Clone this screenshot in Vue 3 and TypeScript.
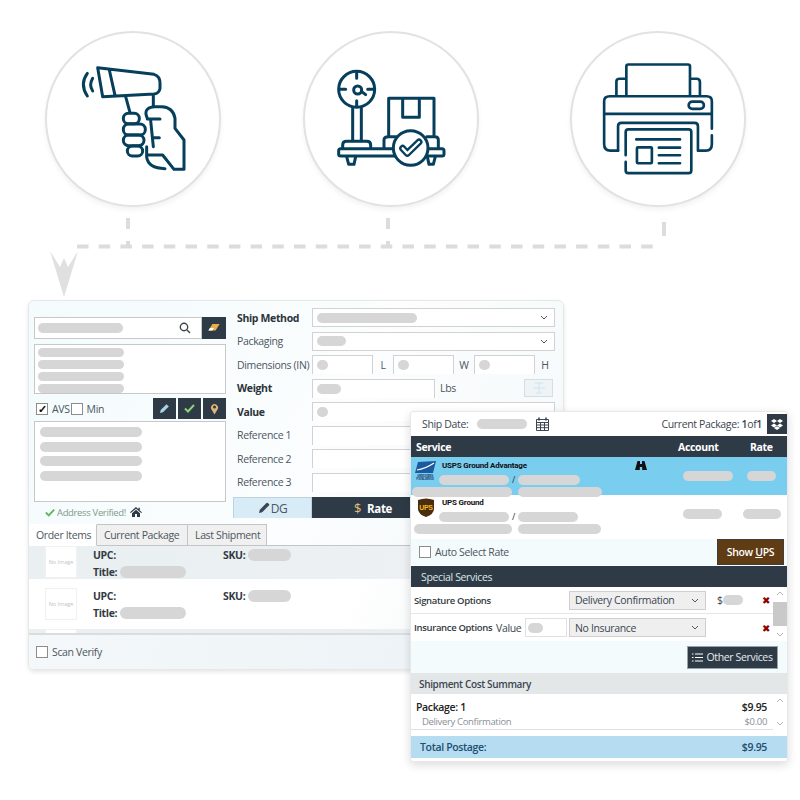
<script setup lang="ts">
const addressLines = [86, 86, 86, 86]
const shipLines = [102, 102, 102, 102]
const fields = [
  { label: 'Ship Method', bold: true, pill: 100, select: true },
  { label: 'Packaging', bold: false, pill: 29, select: true }
]
const refs = ['Reference 1', 'Reference 2', 'Reference 3']
const items = [
  { id: 1, shaded: true },
  { id: 2, shaded: false }
]
const rates = [
  { id: 'usps', name: 'USPS Ground Advantage', active: true, a: 70, b: 62, c: 100, d: 84, acct: 50, rate: 29, rateOffset: 0, indent: 0 },
  { id: 'ups', name: 'UPS Ground', active: false, a: 70, b: 60, c: 98, d: 83, acct: 39, rate: 38, rateOffset: -4, indent: 2 }
]
</script>

<template>
  <div class="page">
    <div class="steps">
      <div class="step">
        <svg viewBox="45 -57 528 528" class="step__icon">
          <path d="M203 53L372 73Q390 78 390 100V115Q388 130 372 132L218 140ZM238 60L255 136M172 70Q148 102 172 138M188 85Q176 105 188 123M287 140L300 188M370 134V170" />
          <path d="M352 205Q338 175 370 170H395Q430 172 435 205V235L462 270V358H432L398 315H350M352 207H390M362 212L370 290M388 263H372M350 290V322Q355 355 405 356" />
          <rect x="280" y="190" width="48" height="31" rx="15" />
          <rect x="280" y="222" width="66" height="33" rx="16" />
          <rect x="280" y="255" width="62" height="32" rx="16" />
          <rect x="292" y="288" width="46" height="30" rx="15" />
        </svg>
      </div>
      <div class="step">
        <svg viewBox="39 -57 528 528" class="step__icon">
          <circle cx="200" cy="118" r="54" />
          <path d="M200 68V85M200 152V168M150 118H167M233 118H250M214 124L227 134M188 172V272M214 172V272" />
          <circle cx="203" cy="120" r="12" />
          <path d="M158 293V285Q158 274 170 274H230Q242 274 242 285V293" />
          <path d="M320 296H152Q146 296 146 302V312Q146 318 152 318H320M405 296H456Q462 296 462 302V312Q462 318 456 318H405" />
          <path d="M170 320L176 343H192L197 320M412 320L417 343H430L436 320" />
          <path d="M296 260V145H432V260M338 145V202H388V145M282 293V270Q282 260 295 260H320M410 260H435Q445 260 445 270V293" />
          <circle cx="362" cy="294" r="52" class="step__fill" />
          <path d="M338 295L352 310L387 276" class="step__check" />
          <path d="M338 295L352 310L387 276" class="step__check-in" />
        </svg>
      </div>
      <div class="step">
        <svg viewBox="30 -57 531 531" class="step__icon step__icon--thin">
          <path d="M200 138V50Q200 44 206 44H386Q392 44 392 50V138M170 138V95Q170 87 180 87H198M394 87H412Q422 87 422 97V138" />
          <path d="M458 238V155Q458 140 442 140H150Q133 140 133 155V285Q133 304 152 304H175M458 258V285Q458 304 440 304H418M133 193H458" />
          <rect x="388" y="156" width="46" height="22" rx="11" />
          <path d="M175 304V230Q175 220 185 220H406Q416 220 416 230V304" />
          <path d="M198 318V248Q198 240 206 240H388Q396 240 396 248V364Q396 372 388 372H206Q198 372 198 364V338" />
          <path d="M230 270H362M298 295H362M298 318H362M298 342H362" />
          <rect x="232" y="294" width="45" height="48" rx="3" />
        </svg>
      </div>
    </div>

    <svg class="flow" width="800" height="300" viewBox="0 0 800 300">
      <path d="M128 218V229M128 241V247M388 218V229M388 241V247M664 222V236" class="flow__stub" />
      <path d="M77 246.5H655" class="flow__line" />
      <polygon points="50,251 60,267 64,258 68,267 78,251 64,297" class="flow__arrow" />
    </svg>

    <section class="shipment">
      <div class="shipment__top">
        <div class="address">
          <div class="search">
            <div class="search__input">
              <span class="pill" style="width: 85px"></span>
              <svg width="12" height="12" viewBox="0 0 12 12" class="search__glass">
                <circle cx="5" cy="5" r="3.7" />
                <path d="M8 8l3 3" />
              </svg>
            </div>
            <button class="dark-btn dark-btn--wide">
              <svg width="12" height="8" viewBox="0 0 14 10"><path d="M5 0h9L9 8H0z" fill="#e8b04a" /><path d="M0 8l2-3h5L5 8z" fill="#fff" /></svg>
            </button>
          </div>
          <div class="box box--list">
            <span v-for="(w, i) in addressLines" :key="i" class="pill pill--line" :style="{ width: w + 'px' }"></span>
          </div>
          <div class="avs">
            <label class="check"><span class="check__box check__box--on">✓</span>AVS</label>
            <label class="check"><span class="check__box"></span>Min</label>
            <div class="avs__actions">
              <button class="dark-btn">
                <svg width="11" height="11" viewBox="0 0 11 11"><path d="M1 10l.7-3L7.5 1.2l2.3 2.3L4 9.3z" fill="#a9d3ea" /></svg>
              </button>
              <button class="dark-btn">
                <svg width="11" height="9" viewBox="0 0 11 9"><path d="M1 4.5L4 7.5 10 1" fill="none" stroke="#8fd07a" stroke-width="2" /></svg>
              </button>
              <button class="dark-btn">
                <svg width="9" height="12" viewBox="0 0 9 12"><path d="M4.5 11.5L1.5 6.5a3.5 3.5 0 1 1 6 0z" fill="#e2b27a" /><circle cx="4.5" cy="4" r="1.5" fill="#2e3b47" /></svg>
              </button>
            </div>
          </div>
          <div class="box box--address">
            <span v-for="(w, i) in shipLines" :key="i" class="pill" :style="{ width: w + 'px' }"></span>
          </div>
          <div class="verified">
            <svg width="10" height="9" viewBox="0 0 12 10"><path d="M1 5l3.5 3.5L11 1.5" fill="none" stroke="#5cb85c" stroke-width="2.2" /></svg>
            <span>Address Verified!</span>
            <svg width="12" height="10" viewBox="0 0 12 10"><path d="M6 0L0 5.2l.8.8L6 1.8 11.2 6l.8-.8L9.8 3.4V.8H8.4v1.4zM2 6.2V10h3V7h2v3h3V6.2L6 2.8z" fill="#2e3b47" /></svg>
          </div>
        </div>

        <div class="details">
          <div v-for="f in fields" :key="f.label" class="field">
            <span class="field__label" :class="{ 'field__label--bold': f.bold }">{{ f.label }}</span>
            <div class="input input--select">
              <span class="pill" :style="{ width: f.pill + 'px' }"></span>
              <svg width="8" height="5" viewBox="0 0 8 5" class="input__caret"><path d="M1 1l3 3 3-3" /></svg>
            </div>
          </div>
          <div class="field">
            <span class="field__label">Dimensions (IN)</span>
            <div class="input input--dim"><span class="pill pill--dot"></span></div>
            <span class="unit">L</span>
            <div class="input input--dim"><span class="pill pill--dot"></span></div>
            <span class="unit">W</span>
            <div class="input input--dim"><span class="pill pill--dot"></span></div>
            <span class="unit">H</span>
          </div>
          <div class="field">
            <span class="field__label field__label--bold">Weight</span>
            <div class="input input--weight"><span class="pill" style="width: 24px"></span></div>
            <span class="unit unit--lbs">Lbs</span>
            <button class="scale-btn">
              <svg width="14" height="12" viewBox="0 0 14 12"><path d="M7 1v9M3 1h8M1 6h12M4 11h6" fill="none" stroke="#cfe4f2" stroke-width="1" /></svg>
            </button>
          </div>
          <div class="field">
            <span class="field__label field__label--bold">Value</span>
            <div class="input input--fill"><span class="pill pill--dot"></span></div>
          </div>
          <div v-for="r in refs" :key="r" class="field">
            <span class="field__label">{{ r }}</span>
            <div class="input input--fill"></div>
          </div>
          <div class="actions">
            <button class="actions__dg">
              <svg width="12" height="12" viewBox="0 0 12 12"><path d="M1 11l.8-3.2L8.5 1.1a1 1 0 0 1 1.4 0l1 1a1 1 0 0 1 0 1.4L4.2 10.2z" fill="#3c4650" /></svg>
              DG
            </button>
            <button class="actions__rate"><span class="actions__dollar">$</span>Rate</button>
          </div>
        </div>
      </div>

      <div class="tabs">
        <span class="tab tab--active">Order Items</span>
        <span class="tab">Current Package</span>
        <span class="tab">Last Shipment</span>
      </div>
      <div class="items">
        <div v-for="item in items" :key="item.id" class="item" :class="{ 'item--shaded': item.shaded }">
          <div class="item__thumb">No Image</div>
          <div class="item__info">
            <span class="item__cell">UPC:</span>
            <span class="item__cell">SKU:<span class="pill" style="width: 43px; height: 12px"></span></span>
            <span class="item__cell">Title:<span class="pill" style="width: 66px; height: 12px"></span></span>
          </div>
        </div>
        <div class="item item--peek"><div class="item__thumb"></div></div>
      </div>
      <div class="shipment__foot">
        <label class="check"><span class="check__box"></span>Scan Verify</label>
      </div>
    </section>

    <section class="rating">
      <div class="rating__head">
        <span class="rating__date">Ship Date:</span>
        <span class="pill" style="width: 50px"></span>
        <svg width="13" height="14" viewBox="0 0 13 14" class="rating__cal">
          <path d="M.5 2.5h12v11H.5zM.5 5.5h12M4.5 5.5v8M8.5 5.5v8M.5 8h12M.5 10.7h12" fill="none" stroke="#3c4650" />
          <path d="M3 .5v3M10 .5v3" stroke="#3c4650" stroke-width="1.6" />
        </svg>
        <span class="rating__package">Current Package: <b>1</b>of<b>1</b></span>
        <button class="dark-btn dark-btn--box">
          <svg width="12" height="11" viewBox="0 0 12 11" fill="#fff"><path d="M3 0L0 2l3 2 3-2zM9 0L6 2l3 2 3-2zM3 4.4L0 6.4l3 2 3-2zM9 4.4l-3 2 3 2 3-2zM3 9l3 2 3-2-3-1.8z" /></svg>
        </button>
      </div>
      <div class="rate-grid rate-grid--head">
        <span>Service</span><span>Account</span><span>Rate</span>
      </div>
      <div v-for="r in rates" :key="r.id" class="rate-grid rate-row" :class="{ 'rate-row--active': r.active }">
        <div class="service">
          <div class="service__logo">
            <svg v-if="r.id === 'usps'" width="23" height="20" viewBox="0 0 23 20">
              <polygon points="4,1 22,0 19,12 1,12" fill="#1c5a9e" />
              <path d="M3 9Q11 8 20 2" fill="none" stroke="#fff" stroke-width="1.2" />
              <text x="11" y="15.5" font-size="2.6" text-anchor="middle" fill="#1c3f70" font-family="Liberation Sans, sans-serif" font-weight="700">UNITED STATES</text>
              <text x="11" y="18.5" font-size="2.6" text-anchor="middle" fill="#1c3f70" font-family="Liberation Sans, sans-serif" font-weight="700">POSTAL SERVICE</text>
            </svg>
            <svg v-else width="16" height="19" viewBox="0 0 16 19">
              <path d="M0 2Q8-1 16 2V11Q16 16 8 19 0 16 0 11Z" fill="#4a2d0e" />
              <text x="8" y="12" font-size="7" text-anchor="middle" fill="#f5b81c" font-family="Liberation Sans, sans-serif" font-weight="700">UPS</text>
            </svg>
          </div>
          <div class="service__main">
            <span class="service__name">{{ r.name }}</span>
            <div class="service__line">
              <span class="pill" :style="{ width: r.a + 'px' }"></span>
              <span class="service__slash">/</span>
              <span class="pill" :style="{ width: r.b + 'px' }"></span>
            </div>
          </div>
          <div class="service__line service__line--wide" :style="{ marginLeft: r.indent + 'px' }">
            <span class="pill" :style="{ width: r.c + 'px' }"></span>
            <span class="pill" :style="{ width: r.d + 'px' }"></span>
          </div>
          <svg v-if="r.active" width="12" height="10" viewBox="0 0 12 10" class="service__bino">
            <path d="M2.5 0h2.5v3h2V0h2.5L12 9H7.2V6H4.8v3H0z" fill="#111" />
          </svg>
        </div>
        <div class="rate-cell"><span class="pill pill--cell" :style="{ width: r.acct + 'px' }"></span></div>
        <div class="rate-cell"><span class="pill pill--cell" :style="{ width: r.rate + 'px', marginLeft: r.rateOffset + 'px' }"></span></div>
      </div>
      <div class="auto">
        <label class="check"><span class="check__box"></span>Auto Select Rate</label>
        <button class="auto__ups">Show <u>U</u>PS</button>
      </div>
      <div class="band">Special Services</div>
      <div class="options">
        <div class="options__rows">
          <div class="option">
            <span class="option__label">Signature Options</span>
            <div class="fake-select">Delivery Confirmation<svg width="8" height="5" viewBox="0 0 8 5" class="input__caret"><path d="M1 1l3 3 3-3" /></svg></div>
            <span class="option__money">$<span class="pill" style="width: 20px"></span></span>
            <span class="option__x">✖</span>
          </div>
          <div class="option">
            <span class="option__label option__label--short">Insurance Options</span>
            <span class="option__value">Value</span>
            <div class="option__input"><span class="pill" style="width: 15px"></span></div>
            <div class="fake-select">No Insurance<svg width="8" height="5" viewBox="0 0 8 5" class="input__caret"><path d="M1 1l3 3 3-3" /></svg></div>
            <span class="option__money"></span>
            <span class="option__x">✖</span>
          </div>
        </div>
        <div class="scroll">
          <svg width="8" height="5" viewBox="0 0 8 5"><path d="M1 4l3-3 3 3" /></svg>
          <span class="scroll__thumb"></span>
          <svg width="8" height="5" viewBox="0 0 8 5"><path d="M1 1l3 3 3-3" /></svg>
        </div>
      </div>
      <div class="other">
        <button class="other__btn">
          <svg width="11" height="9" viewBox="0 0 11 9"><path d="M0 1h1.5M3 1h8M0 4.5h1.5M3 4.5h8M0 8h1.5M3 8h8" stroke="#fff" stroke-width="1.2" /></svg>
          Other Services
        </button>
      </div>
      <div class="summary-head">Shipment Cost Summary</div>
      <div class="summary">
        <div class="summary__body">
          <div class="summary__row summary__row--bold"><span>Package: 1</span><span>$9.95</span></div>
          <div class="summary__row summary__row--sub"><span>Delivery Confirmation</span><span>$0.00</span></div>
        </div>
        <div class="scroll scroll--plain">
          <svg width="8" height="5" viewBox="0 0 8 5"><path d="M1 4l3-3 3 3" /></svg>
          <svg width="8" height="5" viewBox="0 0 8 5"><path d="M1 1l3 3 3-3" /></svg>
        </div>
      </div>
      <div class="total"><span>Total Postage:</span><span>$9.95</span></div>
    </section>
  </div>
</template>

<style>
html,
body {
  margin: 0;
  background: #fff;
}
</style>

<style scoped>
.page {
  position: relative;
  width: 800px;
  height: 800px;
  overflow: hidden;
  background: #fff;
  font-family: "Open Sans", "Liberation Sans", sans-serif;
  font-size: 10.5px;
  letter-spacing: -0.35px;
  color: #3c4650;
}

button {
  font-family: inherit;
  letter-spacing: inherit;
  border: 0;
  padding: 0;
  cursor: pointer;
}

.pill {
  display: inline-block;
  flex: none;
  height: 10px;
  border-radius: 6px;
  background: #d6d6d6;
}
.pill--dot {
  width: 11px;
  height: 10px;
}
.pill--line {
  height: 9px;
}

/* steps */
.steps {
  display: flex;
  padding: 31px 0 0 45px;
}
.step {
  box-sizing: border-box;
  width: 176px;
  height: 176px;
  border-radius: 50%;
  border: 2px solid #e2e2e2;
  box-shadow: 0 3px 5px rgba(0, 0, 0, 0.05);
  background: #fff;
  flex: none;
}
.step:nth-child(2) {
  margin-left: 82px;
}
.step:nth-child(3) {
  margin-left: 91px;
}
.step__icon {
  display: block;
  width: 176px;
  height: 176px;
  margin: -2px;
  fill: none;
  stroke: #063f5c;
  stroke-width: 9;
  stroke-linecap: round;
  stroke-linejoin: round;
}
.step__icon--thin {
  stroke-width: 8;
}
.step__fill {
  fill: #fff;
}
.step__check {
  stroke-width: 21;
}
.step__check-in {
  stroke: #fff;
  stroke-width: 7;
}

.flow {
  position: absolute;
  left: 0;
  top: 0;
  fill: none;
}
.flow__stub {
  stroke: #dcdcdc;
  stroke-width: 4;
}
.flow__line {
  stroke: #dcdcdc;
  stroke-width: 4;
  stroke-dasharray: 11.5 10.2;
}
.flow__arrow {
  fill: #e0e0e0;
}

/* main panel */
.shipment {
  box-sizing: border-box;
  position: absolute;
  left: 28px;
  top: 300px;
  width: 536px;
  height: 370px;
  display: flex;
  flex-direction: column;
  border: 1px solid #e6e8e8;
  border-radius: 6px;
  background: linear-gradient(120deg, #f3fbfd 0%, #fbfdfe 50%, #f4f8fa 100%);
  box-shadow: 0 2px 4px rgba(0, 0, 0, 0.1);
}
.shipment__top {
  display: flex;
  height: 223px;
}
.address {
  box-sizing: border-box;
  width: 204px;
  flex: none;
  padding: 16px 0 0 5px;
  display: flex;
  flex-direction: column;
}
.search {
  display: flex;
  height: 22px;
  width: 192px;
}
.search__input {
  box-sizing: border-box;
  flex: 1;
  display: flex;
  align-items: center;
  justify-content: space-between;
  padding: 0 10px 0 3px;
  background: #fff;
  border: 1px solid #c8c8c8;
}
.search__glass {
  fill: none;
  stroke: #3c4650;
  stroke-width: 1.4;
}
.dark-btn {
  display: flex;
  align-items: center;
  justify-content: center;
  width: 23px;
  height: 21px;
  background: #2e3b47;
  flex: none;
}
.dark-btn--wide {
  width: 24px;
  height: 22px;
}
.dark-btn--box {
  width: 20px;
  height: 20px;
}
.box {
  box-sizing: border-box;
  width: 192px;
  background: #fff;
  border: 1px solid #c8c8c8;
  display: flex;
  flex-direction: column;
}
.box--list {
  height: 50px;
  margin-top: 5px;
  padding: 3px 0 0 3px;
  gap: 3px;
}
.box--address {
  height: 81px;
  margin-top: 2px;
  padding: 5px 0 0 5px;
  gap: 4.5px;
}
.avs {
  display: flex;
  align-items: center;
  height: 21px;
  margin-top: 4px;
  width: 192px;
}
.avs__actions {
  margin-left: auto;
  display: flex;
  gap: 2px;
}
.check {
  display: inline-flex;
  align-items: center;
  gap: 2px;
  color: #4d565e;
}
.check__box {
  box-sizing: border-box;
  display: inline-flex;
  align-items: center;
  justify-content: center;
  width: 12px;
  height: 12px;
  margin-right: 2px;
  background: #fff;
  border: 1px solid #8c8c8c;
  font-size: 11px;
  font-weight: 700;
  color: #111;
}
.avs .check:first-child {
  margin: 0 1px 0 2px;
}
.verified {
  display: flex;
  align-items: center;
  gap: 2px;
  padding: 3px 0 0 11px;
  height: 14px;
  font-size: 9.5px;
  color: #7f9a8b;
}
.verified span {
  margin-right: 2px;
}

.details {
  flex: 1;
  padding: 7px 9px 0 0;
  display: flex;
  flex-direction: column;
  gap: 4.5px;
}
.field {
  display: flex;
  align-items: center;
  height: 19px;
  padding-left: 4px;
}
.field__label {
  width: 75px;
  flex: none;
  color: #4d565e;
  white-space: nowrap;
}
.field__label--bold {
  font-weight: 700;
  color: #2b333a;
}
.input {
  box-sizing: border-box;
  height: 19px;
  display: flex;
  align-items: center;
  padding-left: 4px;
  background: #fff;
  border: 1px solid #d2d2d2;
  border-width: 1.5px 1px 0 1px;
}
.input--select {
  flex: 1;
  justify-content: space-between;
  padding-right: 6px;
  border-bottom-width: 1px;
}
.input--fill {
  flex: 1;
}
.input--dim {
  width: 61px;
}
.input--weight {
  width: 123px;
}
.input__caret {
  fill: none;
  stroke: #555;
  stroke-width: 1;
  flex: none;
}
.unit {
  width: 20px;
  text-align: center;
  color: #4d565e;
}
.unit--lbs {
  box-sizing: border-box;
  width: 89px;
  padding-left: 5px;
  text-align: left;
}
.scale-btn {
  width: 29px;
  height: 18px;
  background: #eef3f6;
  border: 1px solid #d8dde0;
  display: flex;
  align-items: center;
  justify-content: center;
}
.actions {
  display: flex;
  height: 21px;
  margin: 1px 0 0 0;
}
.actions__dg {
  width: 79px;
  display: flex;
  align-items: center;
  justify-content: center;
  gap: 1px;
  background: #d8ecf7;
  border: 1px solid #bcd3df;
  border-bottom: 0;
  font-size: 12px;
  color: #4d565e;
}
.actions__rate {
  flex: 1;
  background: #2e3b47;
  color: #fff;
  font-size: 11.5px;
  font-weight: 700;
  text-align: left;
  padding-left: 42px;
}
.actions__dollar {
  color: #e8c07a;
  font-size: 13px;
  font-weight: 400;
  margin-right: 6px;
}

/* tabs and items */
.tabs {
  display: flex;
  height: 22px;
  box-sizing: border-box;
  border-bottom: 1px solid #c4c4c4;
  flex: none;
}
.tab {
  box-sizing: border-box;
  display: flex;
  align-items: center;
  padding: 0 7px;
  height: 22px;
  background: #f0f0f0;
  border: 1px solid #c4c4c4;
  border-left: 0;
  color: #4d565e;
  white-space: nowrap;
}
.tab--active {
  background: #fff;
  border-color: transparent #c4c4c4 transparent transparent;
  width: 68px;
}
.tab:nth-child(2) {
  width: 91px;
}
.tab:nth-child(3) {
  width: 79px;
}
.items {
  height: 87px;
  flex: none;
  background: linear-gradient(115deg, #fff 60%, #eef2f4);
  border-bottom: 2px solid #dcdcdc;
  overflow: hidden;
}
.item {
  display: flex;
  gap: 16px;
  height: 50px;
  padding-left: 16px;
  align-items: center;
}
.item--shaded {
  height: 33px;
  align-items: flex-start;
  background: linear-gradient(90deg, #eaeff2, #edf1f3);
}
.item--peek {
  height: 4px;
  align-items: flex-start;
  background: #eaeff2;
}
.item__thumb {
  box-sizing: border-box;
  width: 32px;
  height: 32px;
  flex: none;
  display: flex;
  align-items: center;
  justify-content: center;
  background: #fff;
  border: 1px solid #f1f1f1;
  font-size: 5.5px;
  letter-spacing: 0;
  color: #c4c4c4;
  white-space: nowrap;
}
.item__info {
  display: grid;
  grid-template-columns: 130px 1fr;
  align-items: center;
  row-gap: 5px;
  font-weight: 700;
  color: #333b42;
}
.item__cell {
  display: flex;
  align-items: center;
  gap: 3px;
  height: 12px;
}
.item--shaded .item__info {
  padding-top: 3px;
}
.shipment__foot {
  flex: 1;
  display: flex;
  align-items: center;
  padding-left: 7px;
  background: linear-gradient(100deg, #f4f8fa, #eaf1f5);
  border-radius: 0 0 6px 6px;
}

/* rating overlay */
.rating {
  box-sizing: border-box;
  position: absolute;
  left: 410px;
  top: 411px;
  width: 378px;
  height: 351px;
  display: flex;
  flex-direction: column;
  background: #fff;
  border: 1px solid #e8e8e8;
  border-radius: 3px;
  box-shadow: 0 3px 10px rgba(0, 0, 0, 0.14);
}
.rating__head {
  display: flex;
  align-items: center;
  height: 24px;
  flex: none;
  padding-left: 11px;
}
.rating__date {
  width: 55px;
}
.rating__cal {
  margin-left: 9px;
}
.rating__package {
  margin-left: auto;
  margin-right: 5px;
  white-space: pre;
}
.rating__package b {
  font-weight: 600;
}
.rate-grid {
  display: grid;
  grid-template-columns: 272px 64px 1fr;
}
.rate-grid--head {
  height: 21px;
  flex: none;
  align-items: center;
  background: #2e3b47;
  color: #fff;
  font-weight: 700;
  padding-left: 5px;
  grid-template-columns: 262px 72px 1fr;
}
.rate-row {
  flex: none;
  height: 44px;
  background: #fff;
}
.rate-row--active {
  height: 38px;
  background: #79cdee;
}
.service {
  position: relative;
  display: grid;
  grid-template-columns: 27px 1fr;
  align-content: start;
  padding: 4px 0 0 1px;
}
.rate-row:not(.rate-row--active) .service {
  padding-top: 3px;
}
.service__logo {
  height: 21px;
  display: flex;
  justify-content: center;
}
.service__main {
  display: flex;
  flex-direction: column;
  gap: 2px;
}
.service__name {
  font-family: Roboto, "Liberation Sans", sans-serif;
  font-size: 8px;
  font-weight: 700;
  letter-spacing: -0.2px;
  color: #111;
  padding-left: 3px;
  line-height: 10px;
}
.service__line {
  display: flex;
  align-items: center;
  gap: 3px;
}
.service__slash {
  width: 3px;
  font-size: 9px;
  color: #333;
}
.service__line--wide {
  grid-column: 1 / 3;
  gap: 6px;
  margin-top: 1px;
}
.service__bino {
  position: absolute;
  left: 224px;
  top: 4px;
}
.rate-cell {
  padding-top: 14px;
}
.pill--cell {
  display: block;
}
.auto {
  display: flex;
  align-items: center;
  justify-content: space-between;
  height: 26px;
  flex: none;
  padding: 0 3px 0 8px;
  background: #f4fbfd;
}
.auto__ups {
  width: 67px;
  height: 26px;
  background: #5f3c13;
  border: 1px solid #3e3e3e;
  color: #fff;
  font-size: 10.5px;
  font-weight: 600;
}
.band {
  display: flex;
  align-items: center;
  height: 21px;
  flex: none;
  margin-top: 1px;
  padding-left: 10px;
  background: #2e3b47;
  color: #dfe5e9;
}
.options {
  display: flex;
  height: 54px;
  flex: none;
}
.options__rows {
  flex: 1;
}
.option {
  box-sizing: border-box;
  display: flex;
  align-items: center;
  height: 27px;
  padding-left: 3px;
  border-bottom: 1px solid #e6e6e6;
}
.option:last-child {
  border-bottom: 0;
}
.option__label {
  font-size: 9.5px;
  font-weight: 600;
  color: #333b42;
  width: 155px;
  flex: none;
  white-space: nowrap;
}
.option__label--short {
  width: 82px;
}
.option__value {
  width: 29px;
  flex: none;
}
.option__input {
  box-sizing: border-box;
  width: 42px;
  height: 19px;
  margin-right: 2px;
  display: flex;
  align-items: center;
  padding-left: 2px;
  border: 1px solid #e0e0e0;
  flex: none;
}
.fake-select {
  box-sizing: border-box;
  width: 137px;
  height: 19px;
  display: flex;
  align-items: center;
  justify-content: space-between;
  padding: 0 6px 0 5px;
  background: #efefef;
  border: 1px solid #cfcfcf;
  color: #3c4650;
  flex: none;
}
.option__money {
  box-sizing: border-box;
  display: flex;
  align-items: center;
  width: 40px;
  padding-left: 11px;
  flex: none;
}
.option__x {
  width: 10px;
  margin-left: 16px;
  font-size: 10px;
  color: #8b0000;
}
.scroll {
  width: 14px;
  flex: none;
  display: flex;
  flex-direction: column;
  align-items: center;
  justify-content: space-between;
  padding: 4px 0;
  box-sizing: border-box;
}
.scroll svg {
  fill: none;
  stroke: #b4b4b4;
  stroke-width: 1;
}
.scroll__thumb {
  width: 14px;
  height: 24px;
  background: #c9c9c9;
}
.other {
  height: 32px;
  flex: none;
  display: flex;
  align-items: center;
  justify-content: flex-end;
  padding-right: 9px;
  background: #f4fbfd;
}
.other__btn {
  display: flex;
  align-items: center;
  justify-content: center;
  gap: 3px;
  width: 91px;
  height: 23px;
  background: #2e3b47;
  border: 1px solid #98a2aa;
  color: #e8ecef;
  font-size: 10.5px;
}
.summary-head {
  display: flex;
  align-items: center;
  height: 21px;
  flex: none;
  padding-left: 8px;
  background: #e4e7e8;
  font-size: 10px;
  font-weight: 600;
}
.summary {
  display: flex;
  height: 42px;
  flex: none;
}
.summary__body {
  flex: 1;
  height: 36px;
  box-sizing: border-box;
  padding-top: 5px;
  border-bottom: 1px solid #e2dbe8;
}
.summary__row {
  display: flex;
  justify-content: space-between;
  padding: 0 6px 0 5px;
  height: 15px;
  align-items: center;
}
.summary__row--bold {
  font-weight: 600;
  color: #222;
}
.summary__row--sub {
  padding-left: 11px;
  color: #8a9096;
  font-size: 9.5px;
}
.scroll--plain {
  height: 36px;
}
.total {
  display: flex;
  align-items: center;
  justify-content: space-between;
  height: 22px;
  flex: none;
  padding: 0 20px 0 9px;
  background: #b6dcf1;
  color: #1d4f70;
  font-weight: 600;
}
</style>
